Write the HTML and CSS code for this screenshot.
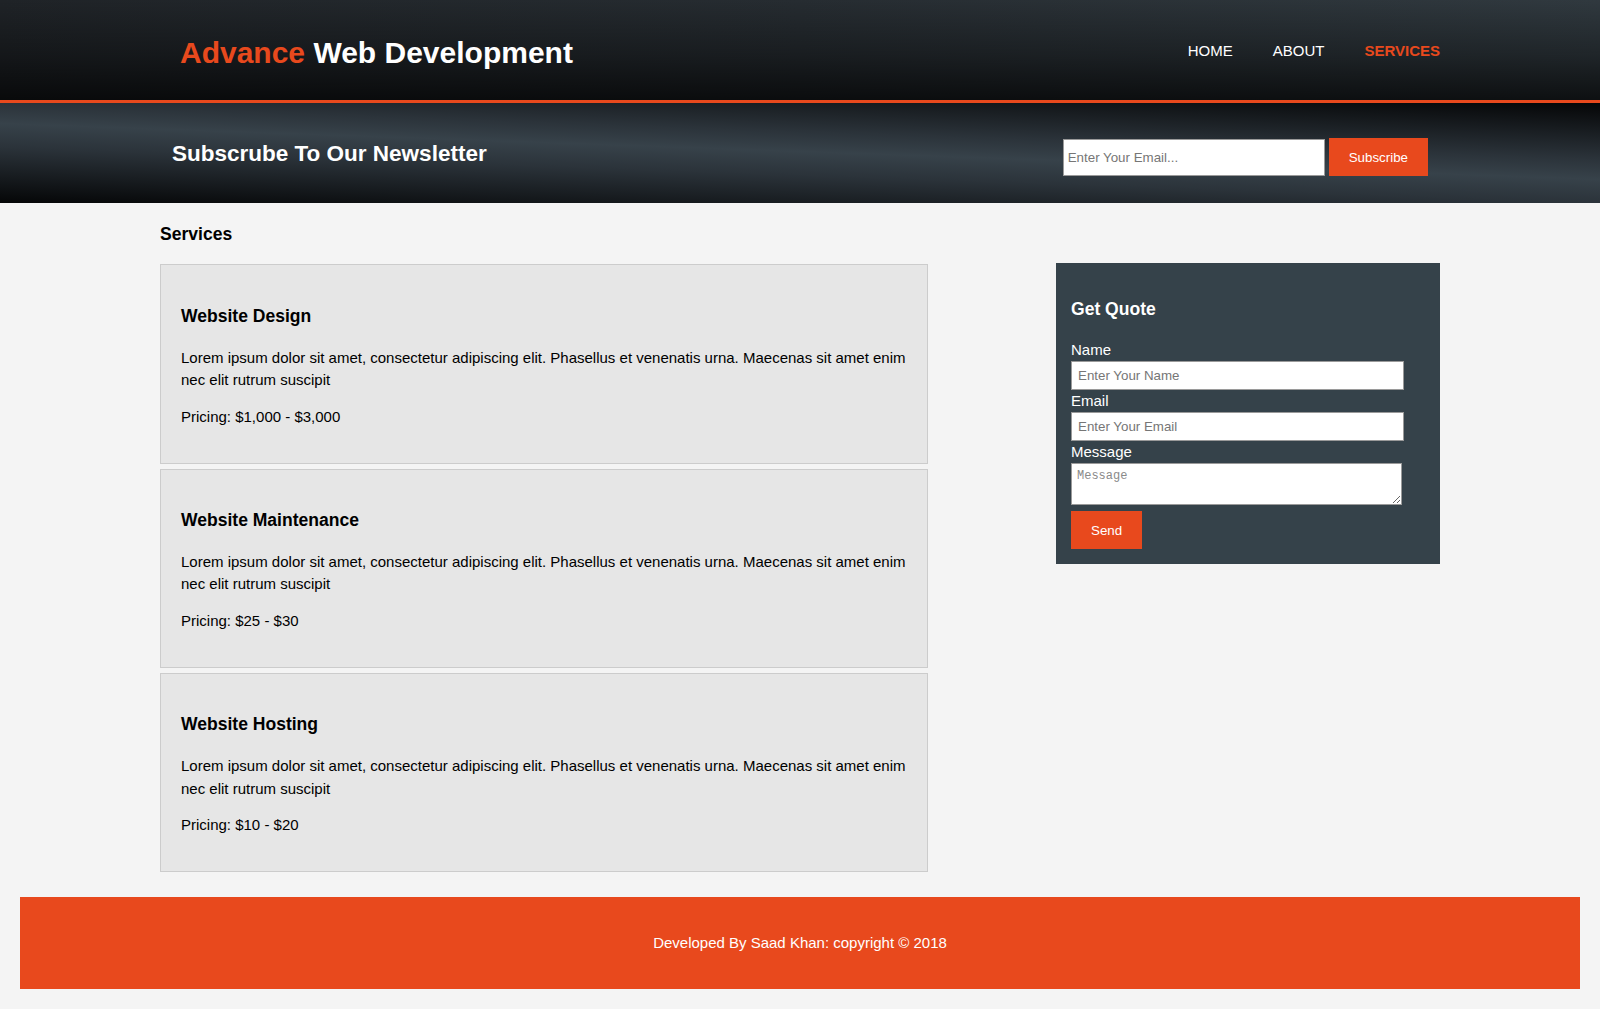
FILE: index.html
```html
<!DOCTYPE html>
<html lang="en">
<head>
<meta charset="utf-8">
<title>Advance Web Development | Services</title>
<link rel="stylesheet" href="styles.css">
</head>
<body>
<header class="site-header">
  <div class="header-inner">
    <div class="branding">
      <h1 class="logo"><span class="highlight">Advance</span> Web Development</h1>
    </div>
    <nav class="main-nav">
      <ul class="nav-list">
        <li class="nav-item"><a class="nav-link" href="#">Home</a></li>
        <li class="nav-item"><a class="nav-link" href="#">About</a></li>
        <li class="nav-item"><a class="nav-link current" href="#">Services</a></li>
      </ul>
    </nav>
  </div>
</header>

<section class="newsletter">
  <div class="newsletter-inner">
    <h1 class="newsletter-title">Subscrube To Our Newsletter</h1>
    <form class="newsletter-form">
      <input type="email" class="newsletter-input" placeholder="Enter Your Email...">
      <button type="submit" class="btn btn-subscribe">Subscribe</button>
    </form>
  </div>
</section>

<section class="main">
  <article class="main-col">
    <h3 class="page-title">Services</h3>
    <ul class="services">
      <li class="service">
        <h3 class="service-title">Website Design</h3>
        <p class="service-text">Lorem ipsum dolor sit amet, consectetur adipiscing elit. Phasellus et venenatis urna. Maecenas sit amet enim nec elit rutrum suscipit</p>
        <p class="service-price">Pricing: $1,000 - $3,000</p>
      </li>
      <li class="service">
        <h3 class="service-title">Website Maintenance</h3>
        <p class="service-text">Lorem ipsum dolor sit amet, consectetur adipiscing elit. Phasellus et venenatis urna. Maecenas sit amet enim nec elit rutrum suscipit</p>
        <p class="service-price">Pricing: $25 - $30</p>
      </li>
      <li class="service">
        <h3 class="service-title">Website Hosting</h3>
        <p class="service-text">Lorem ipsum dolor sit amet, consectetur adipiscing elit. Phasellus et venenatis urna. Maecenas sit amet enim nec elit rutrum suscipit</p>
        <p class="service-price">Pricing: $10 - $20</p>
      </li>
    </ul>
  </article>

  <aside class="sidebar">
    <div class="dark">
      <h3 class="quote-title">Get Quote</h3>
      <form class="quote">
        <label class="quote-label">Name</label>
        <input type="text" class="quote-input" placeholder="Enter Your Name">
        <label class="quote-label">Email</label>
        <input type="email" class="quote-input" placeholder="Enter Your Email">
        <label class="quote-label">Message</label>
        <textarea class="quote-textarea" placeholder="Message"></textarea>
        <button type="submit" class="btn btn-send">Send</button>
      </form>
    </div>
  </aside>
</section>

<footer class="site-footer">
  <p class="footer-text">Developed By Saad Khan: copyright &copy; 2018</p>
</footer>
</body>
</html>
```

FILE: styles.css
```css
html {
  overflow: hidden;
}

body {
  margin: 0;
  padding: 0;
  font: 15px/1.5 "Liberation Sans", Arial, Helvetica, sans-serif;
  background-color: #f4f4f4;
  color: #000;
}

/* Buttons */
.btn {
  height: 38px;
  padding: 0 20px;
  border: 0;
  background: #e8491d;
  color: #ffffff;
  font: 13.33px "Liberation Sans", Arial, sans-serif;
  cursor: pointer;
}

/* Header */
.site-header {
  height: 70px;
  padding-top: 30px;
  border-bottom: 3px solid #e8491d;
  color: #ffffff;
  background:
    linear-gradient(to bottom, rgba(0, 0, 0, 0) 0%, rgba(0, 0, 0, 0.35) 55%, rgba(0, 0, 0, 0.72) 100%),
    linear-gradient(to right, #1f2327 0%, #262c31 50%, #30393f 100%);
}

.header-inner {
  width: 80%;
  margin: 0 auto;
  display: flex;
  justify-content: space-between;
  align-items: flex-start;
}

.branding {
  padding-left: 20px;
}

.logo {
  margin: 0;
  font-size: 30px;
  line-height: 45px;
  font-weight: bold;
}

.highlight {
  color: #e8491d;
}

.main-nav {
  margin-top: 10px;
}

.nav-list {
  list-style: none;
  margin: 0;
  padding: 0;
  display: flex;
  gap: 40px;
}

.nav-link {
  color: #ffffff;
  text-decoration: none;
  text-transform: uppercase;
  font-size: 15px;
  line-height: 22.5px;
}

.nav-link.current {
  color: #e8491d;
  font-weight: bold;
}

/* Newsletter */
.newsletter {
  height: 70px;
  padding: 15px;
  color: #ffffff;
  background: linear-gradient(182deg, #050607 0%, #2b333a 36%, #37424a 49%, #2b333a 64%, #050607 100%);
}

.newsletter-inner {
  width: 80%;
  margin: 0 auto;
  display: flex;
  justify-content: space-between;
  align-items: flex-start;
}

.newsletter-title {
  margin: 19px 0 0;
  font-size: 22.5px;
  line-height: 33.75px;
  font-weight: bold;
}

.newsletter-form {
  margin-top: 20px;
  display: flex;
  align-items: flex-end;
  gap: 4px;
}

.newsletter-input {
  box-sizing: border-box;
  width: 262px;
  height: 37px;
  padding: 0 4px;
  border: 1px solid #9a9a9a;
  background: #ffffff;
  font: 13.33px "Liberation Sans", Arial, sans-serif;
  color: #333;
}

.newsletter-input::placeholder,
.quote-input::placeholder {
  color: #767676;
}

/* Main */
.main {
  width: 80%;
  margin: 0 auto;
  display: flex;
  justify-content: space-between;
  align-items: flex-start;
}

.main-col {
  width: 768px;
}

.page-title {
  margin: 17.55px 0;
  font-size: 17.55px;
  line-height: 26.33px;
}

.services {
  list-style: none;
  margin: 0;
  padding: 0;
}

.service {
  padding: 20px;
  margin-bottom: 5px;
  border: 1px solid #cccccc;
  background: #e6e6e6;
}

.service-title {
  margin: 17.55px 0;
  font-size: 17.55px;
  line-height: 26.33px;
}

.service-text {
  margin: 0 0 14.1px;
}

.service-price {
  margin: 0 0 14.1px;
}

/* Sidebar */
.sidebar {
  width: 384px;
  margin-top: 60px;
}

.dark {
  padding: 15px;
  background: #35424a;
  color: #ffffff;
}

.quote-title {
  margin: 17.55px 0 17px;
  font-size: 17.55px;
  line-height: 26.33px;
}

.quote {
  display: flex;
  flex-direction: column;
  align-items: flex-start;
}

.quote-label {
  display: block;
  line-height: 22.5px;
}

.quote-input {
  box-sizing: border-box;
  width: 333px;
  height: 28.5px;
  padding: 0 6px;
  border: 1px solid #9a9a9a;
  background: #ffffff;
  font: 13.33px "Liberation Sans", Arial, sans-serif;
  color: #333;
}

.quote-textarea {
  box-sizing: border-box;
  width: 331px;
  height: 42px;
  margin-bottom: 6px;
  padding: 5px 5px;
  border: 1px solid #9a9a9a;
  background: #ffffff;
  font: 12px "Liberation Mono", "DejaVu Sans Mono", monospace;
  color: #333;
  resize: vertical;
}

.quote-textarea::placeholder {
  color: #8a8a8a;
}

.btn-send {
  height: 38px;
}

/* Footer */
.site-footer {
  margin: 20px;
  padding: 20px;
  background-color: #e8491d;
  color: #ffffff;
  text-align: center;
}

.footer-text {
  margin: 15px 0;
}
```
